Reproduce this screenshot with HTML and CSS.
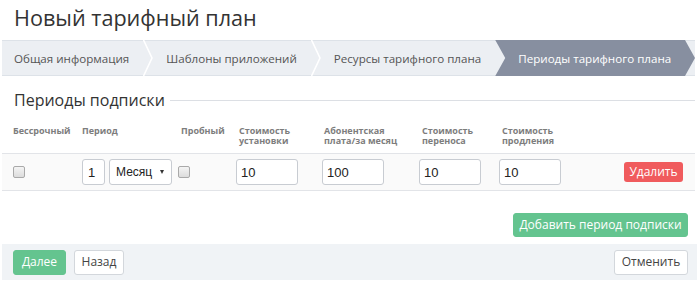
FILE: index.html
```html
<!DOCTYPE html>
<html lang="ru">
<head>
<meta charset="utf-8">
<title>Новый тарифный план</title>
<link rel="stylesheet" href="styles.css">
</head>
<body>
<div class="page">
  <h1 class="title">Новый тарифный план</h1>
  <nav class="steps">
    <div class="step first">Общая информация</div>
    <svg class="sep" width="10" height="36" viewBox="0 0 10 36"><polyline points="0.5,0 9,18 0.5,36" fill="none" stroke="#ffffff" stroke-width="1.6"/></svg>
    <div class="step">Шаблоны приложений</div>
    <svg class="sep" width="10" height="36" viewBox="0 0 10 36"><polyline points="0.5,0 9,18 0.5,36" fill="none" stroke="#ffffff" stroke-width="1.6"/></svg>
    <div class="step">Ресурсы тарифного плана</div>
    <div class="step active">Периоды тарифного плана</div>
  </nav>

  <div class="section-head">
    <h2 class="section-title">Периоды подписки</h2>
    <span class="rule"></span>
  </div>

  <div class="grid head">
    <div class="hcell">Бессрочный</div>
    <div class="hcell">Период</div>
    <div class="hcell pad">Пробный</div>
    <div class="hcell pad"><span class="ln">Стоимость</span><span class="ln">установки</span></div>
    <div class="hcell pad2"><span class="ln">Абонентская</span><span class="ln">плата/за месяц</span></div>
    <div class="hcell pad"><span class="ln">Стоимость</span><span class="ln">переноса</span></div>
    <div class="hcell pad"><span class="ln">Стоимость</span><span class="ln">продления</span></div>
    <div class="hcell"></div>
  </div>

  <div class="grid row">
    <div class="cell"><input type="checkbox" class="chk"></div>
    <div class="cell period">
      <input class="inp num" type="text" value="1">
      <span class="sel-wrap"><select class="sel"><option>Месяц</option></select></span>
    </div>
    <div class="cell"><input type="checkbox" class="chk"></div>
    <div class="cell"><input class="inp price" type="text" value="10"></div>
    <div class="cell"><input class="inp price" type="text" value="100"></div>
    <div class="cell"><input class="inp price" type="text" value="10"></div>
    <div class="cell"><input class="inp price" type="text" value="10"></div>
    <div class="cell end"><button class="btn red">Удалить</button></div>
  </div>

  <div class="add-wrap">
    <button class="btn green add">Добавить период подписки</button>
  </div>

  <div class="footer">
    <button class="btn green">Далее</button>
    <button class="btn white">Назад</button>
    <span class="spacer"></span>
    <button class="btn white">Отменить</button>
  </div>
</div>
</body>
</html>
```

FILE: styles.css
```css
* { box-sizing: border-box; }
html, body { margin: 0; padding: 0; background: #fff; }
body {
  font-family: "Open Sans", "Noto Sans", sans-serif;
  color: #333;
  width: 697px;
  overflow: hidden;
}
.page { padding: 0 2px 0 2px; }

.title {
  margin: 0 0 7px 12px;
  padding-top: 3px;
  height: 33px;
  font-size: 21.6px;
  line-height: 30px;
  font-weight: 400;
  color: #333;
}

.steps {
  display: flex;
  height: 36px;
  background: #eceff3;
  border-top: 1px solid #dde2e8;
  border-bottom: 1px solid #dde2e8;
  align-items: stretch;
}
.step {
  display: flex;
  align-items: center;
  font-size: 11.6px;
  color: #555;
  padding: 0 14px 0 13px;
  white-space: nowrap;
}
.step.first { padding-left: 12px; }
.sep { display: block; flex: none; margin-top: -1px; }
.step.active {
  flex: 1;
  margin: -1px 0;
  padding-left: 23px;
  background: #878fa0;
  color: #fff;
  clip-path: polygon(0 0, calc(100% - 10px) 0, 100% 50%, calc(100% - 10px) 100%, 0 100%, 10px 50%);
}

.section-head {
  display: flex;
  align-items: center;
  margin: 14px 0 16px 12px;
  height: 20px;
}
.section-title {
  margin: 0;
  font-size: 16px;
  line-height: 20px;
  font-weight: 400;
  color: #333;
  white-space: nowrap;
}
.rule {
  flex: 1;
  height: 1px;
  background: #dcdfe4;
  margin-left: 5px;
}

.grid {
  display: grid;
  grid-template-columns: 69px 96px 58px 86px 97px 80px 80px 1fr;
  padding-left: 11px;
}
.grid.head {
  padding-bottom: 7px;
  border-bottom: 1px solid #e2e4e8;
}
.hcell {
  display: flex;
  flex-direction: column;
  font-size: 9px;
  line-height: 10px;
  font-weight: 700;
  color: #7d7d7d;
  white-space: nowrap;
}
.ln { display: block; height: 10px; }
.hcell.pad { padding-left: 3px; }
.hcell.pad2 { padding-left: 2px; }

.grid.row {
  height: 37px;
  background: #fafafa;
  border-bottom: 1px solid #e2e4e8;
  align-items: center;
}
.cell { display: flex; align-items: center; }
.cell.end { justify-content: flex-end; padding-right: 12px; }
.period { gap: 4px; }

.chk {
  appearance: none;
  -webkit-appearance: none;
  margin: 0;
  width: 12px;
  height: 12px;
  border: 1px solid #a9a9a9;
  border-radius: 2px;
  background: linear-gradient(#f4f4f4, #dcdcdc);
}

.inp {
  height: 26px;
  border: 1px solid #c8ccd2;
  border-radius: 3px;
  padding: 0 4px;
  font-family: "Liberation Sans", Arial, sans-serif;
  font-size: 13px;
  color: #222;
  background: #fff;
}
.inp.num { width: 23px; padding: 0 3px 0 5px; }
.inp.price { width: 62px; }

.sel-wrap { position: relative; display: inline-block; height: 26px; }
.sel-wrap::after {
  content: "";
  position: absolute;
  right: 8px;
  top: 11px;
  border-left: 2.5px solid transparent;
  border-right: 2.5px solid transparent;
  border-top: 4px solid #333;
}
.sel {
  appearance: none;
  -webkit-appearance: none;
  display: block;
  width: 63px;
  height: 26px;
  border: 1px solid #c8ccd2;
  border-radius: 3px;
  padding: 0 16px 0 6px;
  font-family: "Liberation Sans", Arial, sans-serif;
  font-size: 12px;
  color: #222;
  background: #fff;
}

.btn {
  font-family: "Open Sans", "Noto Sans", sans-serif;
  font-size: 12px;
  border-radius: 3px;
  border: 1px solid transparent;
  cursor: pointer;
  white-space: nowrap;
  line-height: 1;
}
.btn.red {
  background: #f05b5d;
  color: #fff;
  height: 20px;
  width: 59px;
  padding: 0;
}
.btn.green {
  background: #64c48f;
  border-color: #64c48f;
  color: #fff;
  height: 25px;
  padding: 0 9px;
}
.btn.add { height: 24px; width: 175px; padding: 0; }
.btn.white {
  background: #fff;
  border-color: #d3d7dc;
  color: #444;
  height: 25px;
  padding: 0 9px;
}

.add-wrap {
  display: flex;
  justify-content: flex-end;
  margin-top: 22px;
  padding-right: 7px;
}

.footer {
  display: flex;
  align-items: center;
  margin-top: 7px;
  margin-right: -2px;
  height: 36px;
  padding: 0 9px 0 11px;
  background: #f0f3f6;
  gap: 8px;
}
.footer .btn.green { width: 53px; padding: 0; }
.footer .btn.white { width: 50px; padding: 0; }
.footer .btn.white:last-child { width: 74px; }
.spacer { flex: 1; }
```
